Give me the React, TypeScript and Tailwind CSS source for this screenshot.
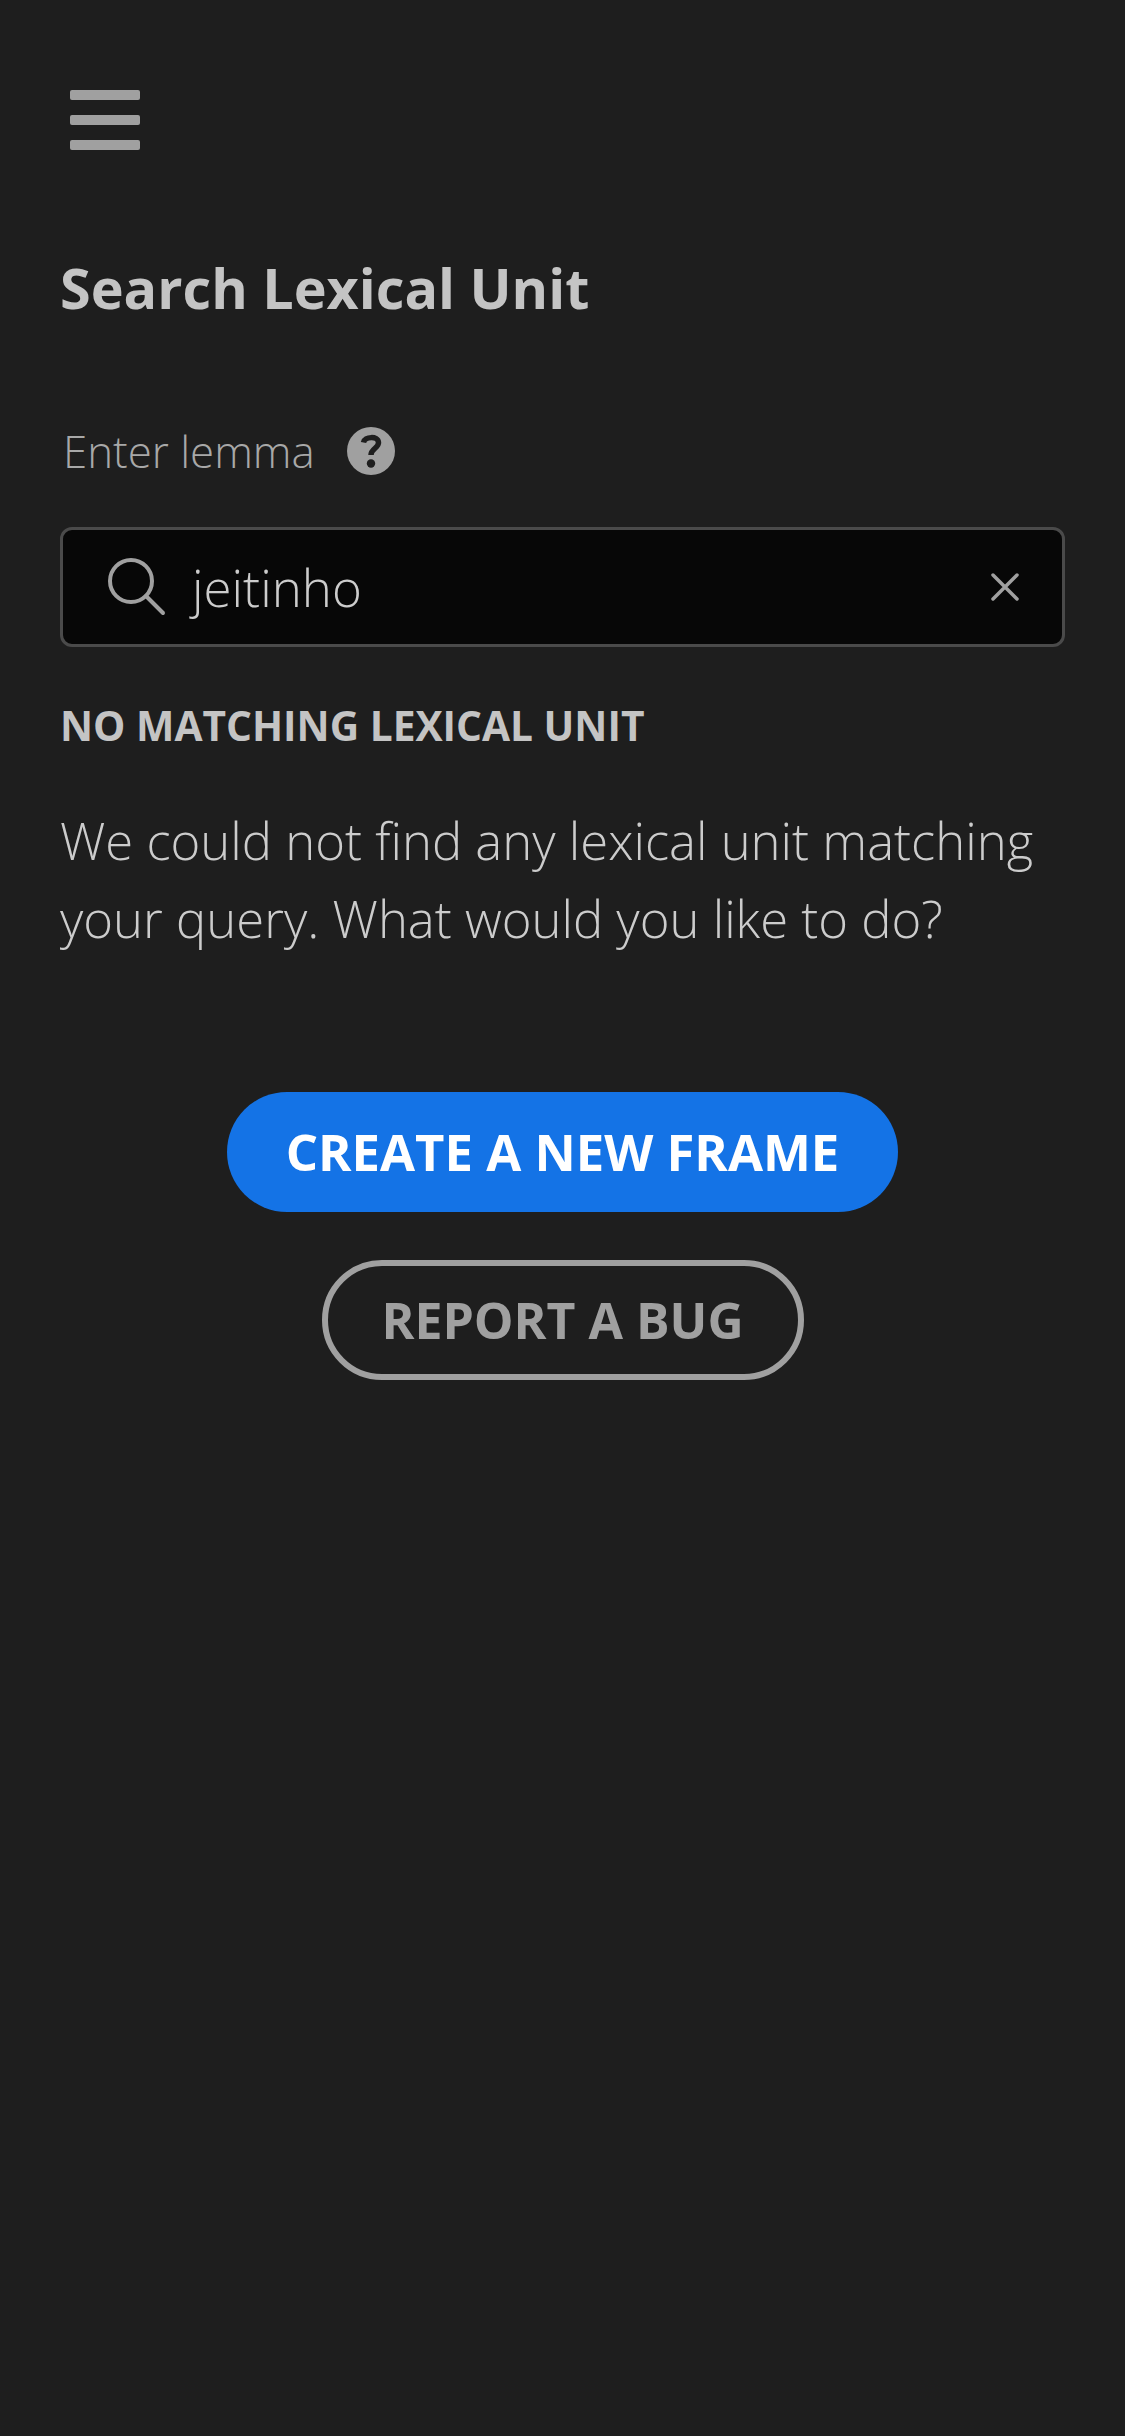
import React from "react";

export default function App() {
  return (
    <div className="min-h-[2436px] bg-[#1e1e1e] px-[60px] pt-[90px] font-['Open_Sans','Noto_Sans',sans-serif] text-[#c4c4c4]">
      <button className="ml-[10px] flex h-[60px] w-[70px] flex-col justify-between">
        <span className="h-[10px] w-full rounded-[2px] bg-[#a0a0a0]" />
        <span className="h-[10px] w-full rounded-[2px] bg-[#a0a0a0]" />
        <span className="h-[10px] w-full rounded-[2px] bg-[#a0a0a0]" />
      </button>
      <h1 className="mt-[99px] text-[55.7px] leading-[76px] font-bold">Search Lexical Unit</h1>
      <div className="mt-[98px] ml-[3px] flex h-[56px] items-center gap-[32px]">
        <span className="text-[43.8px] leading-[56px] font-light text-[#a8a8a8]">Enter lemma</span>
        <svg width="48" height="48" viewBox="0 0 48 48" fill="none">
          <circle cx="24" cy="24" r="24" fill="#a0a0a0" />
          <path d="M16.5 15.5C17.5 9.5 31 8.5 31.5 15.5C31.8 21 24 21.5 24 28" stroke="#1e1e1e" strokeWidth="5.5" />
          <circle cx="24" cy="36.5" r="4.2" fill="#1e1e1e" />
        </svg>
      </div>
      <div className="mt-[48px] flex h-[120px] w-[1005px] items-center rounded-[12px] border-[3px] border-[#4a4a4a] bg-[#070707] pr-[42px] pl-[45px]">
        <svg width="58" height="58" viewBox="0 0 58 58" fill="none" stroke="#a0a0a0" strokeWidth="4">
          <circle cx="23" cy="23" r="21" />
          <path d="M38 38l17 17" strokeLinecap="round" />
        </svg>
        <span className="ml-[26px] flex-1 text-[51px] font-light text-[#cccccc]">jeitinho</span>
        <svg width="30" height="30" viewBox="0 0 30 30" stroke="#a0a0a0" strokeWidth="3.5" strokeLinecap="round">
          <path d="M3 3l24 24M27 3L3 27" />
        </svg>
      </div>
      <p className="mt-[51px] text-[40.7px] leading-[54px] font-bold">NO MATCHING LEXICAL UNIT</p>
      <p className="mt-[50px] text-[50.8px] leading-[78px] font-light text-[#cccccc]">We could not find any lexical unit matching your query. What would you like to do?</p>
      <div className="mt-[134px] flex flex-col items-center gap-[48px]">
        <button className="flex h-[120px] w-[671px] items-center justify-center rounded-full bg-[#1473e6] text-[50.8px] font-bold text-white">CREATE A NEW FRAME</button>
        <button className="flex h-[120px] w-[482px] items-center justify-center rounded-full border-[6px] border-[#a0a0a0] text-[50px] font-bold text-[#a0a0a0]">REPORT A BUG</button>
      </div>
    </div>
  );
}
